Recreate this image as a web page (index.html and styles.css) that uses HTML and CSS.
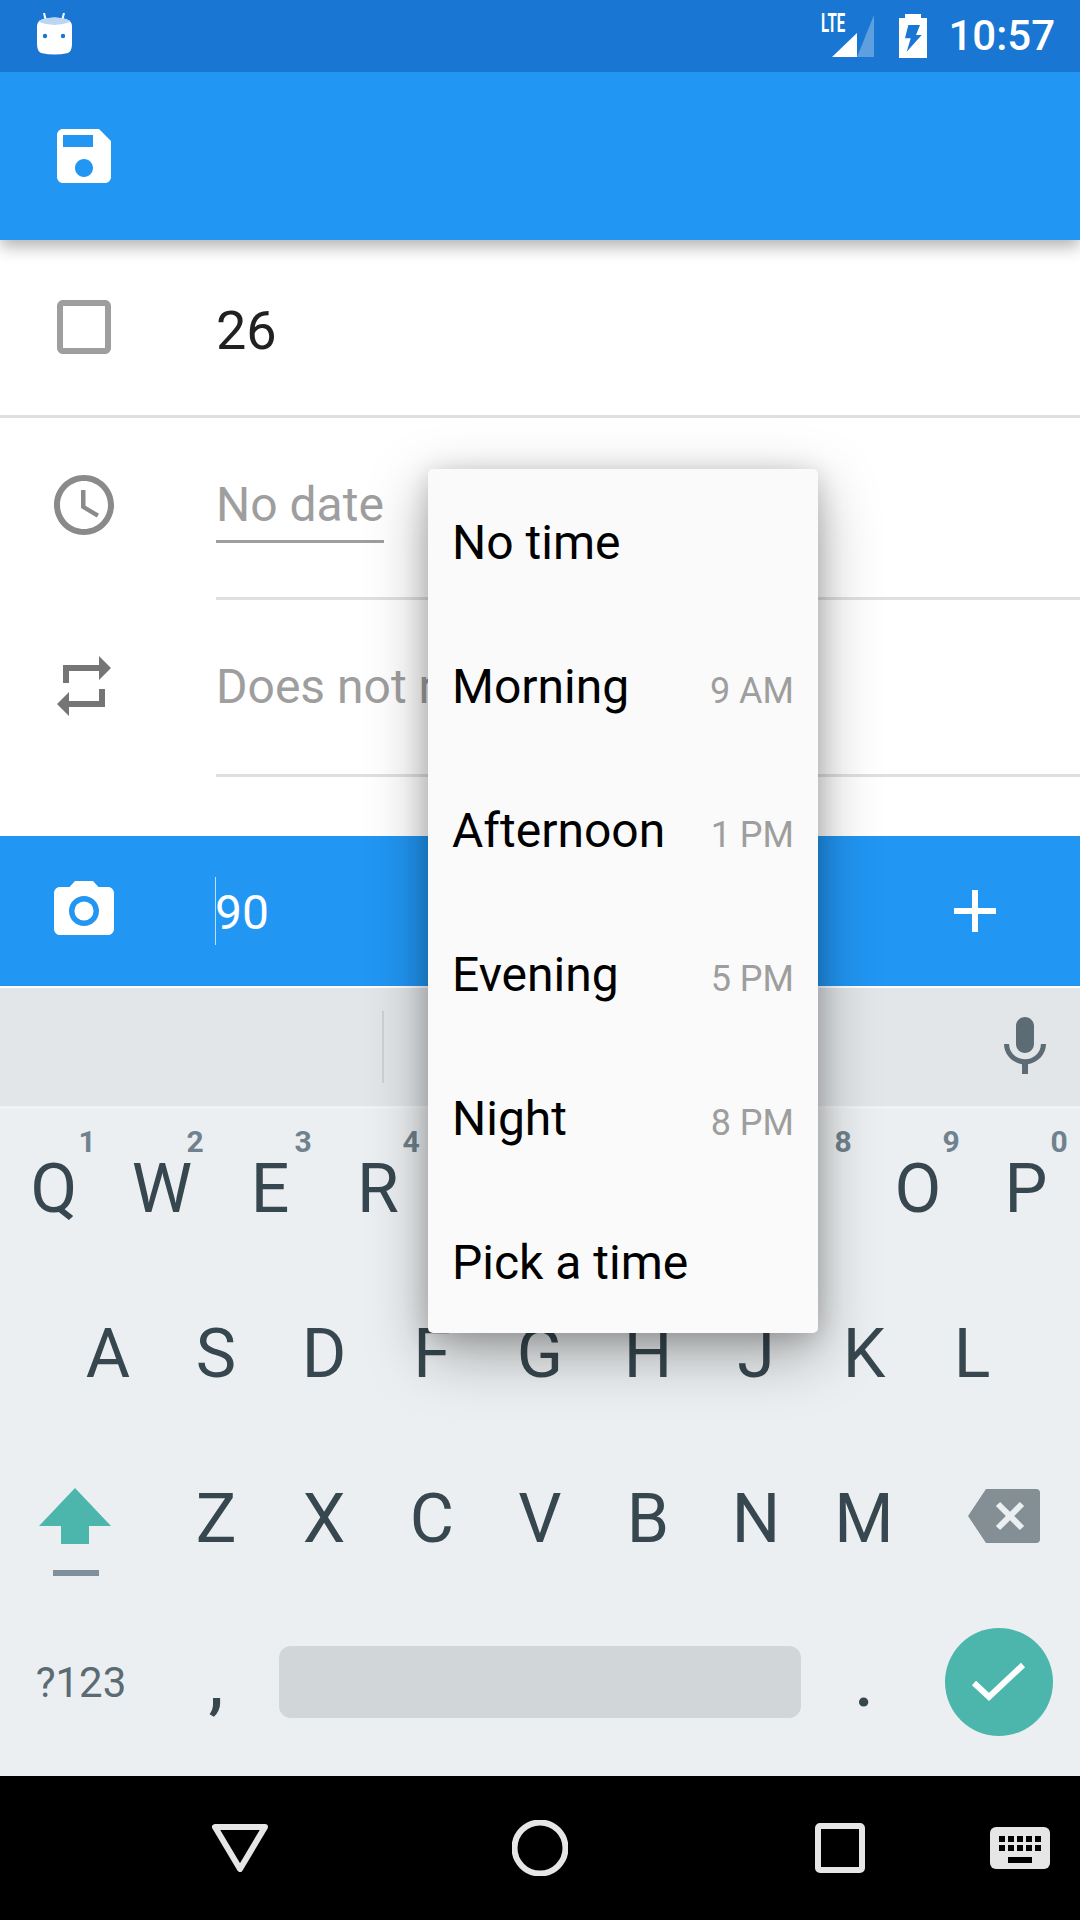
FILE: index.html
```html
<!DOCTYPE html>
<html lang="en">
<head>
    <meta charset="UTF-8">
    <meta name="viewport" content="width=device-width, initial-scale=1.0">
    <title>Edit task</title>
    <link rel="stylesheet" href="styles.css">
</head>
<body>
<div class="screen">
    <div class="status-bar">
        <svg class="mascot" viewBox="0 0 35 42" width="35" height="42">
            <path class="mascot-antenna" d="M7 0l2 8M27 0l-2 8"/>
            <path class="mascot-body" d="M6 6q11.500-3 23 0q6 2 6 7v18q0 7-4 9q-13.500 3-27 0q-4-2-4-9v-18q0-5 6-7z"/>
            <path class="mascot-top" d="M6 6q11.500-3 23 0q3 1 4 3q-15.500 6-31 0q1-2 4-3z"/>
            <circle class="mascot-eye" cx="8" cy="23" r="2.200"/>
            <circle class="mascot-eye" cx="26" cy="23" r="2.200"/>
        </svg>
        <div class="status-right">
            <div class="signal">
                <span class="lte">LTE</span>
                <svg viewBox="0 0 54 44" width="54" height="44">
                    <polygon class="signal-off" points="36,43 53,1 53,43"/>
                    <polygon class="signal-on" points="11,43 36,19 36,43"/>
                </svg>
            </div>
            <svg class="battery" viewBox="0 0 28 44" width="28" height="44">
                <path class="battery-body" d="M6 0h16v4h6v40h-28v-40h6z"/>
                <polygon class="battery-bolt" points="9.300,11 21,11 17,21 22.700,21 7.700,37.700 11.700,24.300 6,24.300"/>
            </svg>
            <span class="clock">10:57</span>
        </div>
    </div>

    <div class="app-bar">
        <svg class="icon icon-white" viewBox="0 0 24 24"><path d="M17 3H5c-1.110 0-2 .9-2 2v14c0 1.100.89 2 2 2h14c1.100 0 2-.9 2-2V7l-4-4zm-5 16c-1.660 0-3-1.340-3-3s1.340-3 3-3 3 1.340 3 3-1.340 3-3 3zm3-10H5V5h10v4z"/></svg>
    </div>

    <div class="form">
        <div class="row row-title">
            <svg class="icon icon-check" viewBox="0 0 24 24"><path d="M19 5v14H5V5h14m0-2H5c-1.100 0-2 .9-2 2v14c0 1.100.9 2 2 2h14c1.100 0 2-.9 2-2V5c0-1.100-.9-2-2-2z"/></svg>
            <span class="title-text">26</span>
        </div>
        <div class="row row-date">
            <svg class="icon icon-grey" viewBox="0 0 24 24"><path d="M11.990 2C6.470 2 2 6.480 2 12s4.470 10 9.990 10C17.520 22 22 17.520 22 12S17.520 2 11.990 2zM12 20c-4.420 0-8-3.580-8-8s3.580-8 8-8 8 3.580 8 8-3.580 8-8 8zm.5-13H11v6l5.250 3.150.75-1.230-4.500-2.670z"/></svg>
            <div class="field">
                <span class="hint hint-link">No date</span>
            </div>
        </div>
        <div class="row row-repeat">
            <svg class="icon icon-dark" viewBox="0 0 24 24"><path d="M7 7h10v3l4-4-4-4v3H5v6h2V7zm10 10H7v-3l-4 4 4 4v-3h12v-6h-2v4z"/></svg>
            <div class="field">
                <span class="hint">Does not repeat</span>
            </div>
        </div>
    </div>

    <div class="add-bar">
        <svg class="icon icon-white" viewBox="0 0 24 24"><circle cx="12" cy="12" r="3.200"/><path d="M9 2L7.170 4H4c-1.100 0-2 .9-2 2v12c0 1.100.9 2 2 2h16c1.100 0 2-.9 2-2V6c0-1.100-.9-2-2-2h-3.170L15 2H9zm3 15c-2.760 0-5-2.240-5-5s2.240-5 5-5 5 2.240 5 5-2.240 5-5 5z"/></svg>
        <span class="add-input">90</span>
        <svg class="plus" viewBox="0 0 42 42" width="42" height="42"><path d="M18 0h6v18h18v6h-18v18h-6v-18h-18v-6h18z"/></svg>
    </div>

    <div class="suggest-strip">
        <div class="suggest-cell"></div>
        <div class="suggest-cell"></div>
        <svg class="mic" viewBox="0 0 24 24"><path d="M12 14c1.660 0 2.990-1.340 2.990-3L15 5c0-1.660-1.340-3-3-3S9 3.340 9 5v6c0 1.660 1.340 3 3 3zm5.300-3c0 3-2.540 5.100-5.300 5.100S6.700 14 6.700 11H5c0 3.410 2.720 6.230 6 6.720V21h2v-3.280c3.280-.48 6-3.300 6-6.720h-1.700z"/></svg>
    </div>

    <div class="keyboard">
        <div class="key-row">
            <div class="key">Q<span class="key-num">1</span></div>
            <div class="key">W<span class="key-num">2</span></div>
            <div class="key">E<span class="key-num">3</span></div>
            <div class="key">R<span class="key-num">4</span></div>
            <!-- T Y U sit fully behind the time popup -->
            <div class="key"></div>
            <div class="key"></div>
            <div class="key"></div>
            <div class="key"><span class="key-num">8</span></div>
            <div class="key">O<span class="key-num">9</span></div>
            <div class="key">P<span class="key-num">0</span></div>
        </div>
        <div class="key-row key-row-home">
            <div class="key">A</div>
            <div class="key">S</div>
            <div class="key">D</div>
            <div class="key">F</div>
            <div class="key">G</div>
            <div class="key">H</div>
            <div class="key">J</div>
            <div class="key">K</div>
            <div class="key">L</div>
        </div>
        <div class="key-row">
            <div class="key key-wide key-shift">
                <svg viewBox="0 0 72 90" width="72" height="90">
                    <polygon class="shift-arrow" points="36,0 72,38 50,38 50,56 22,56 22,38 0,38"/>
                    <rect class="shift-lock" x="14" y="82" width="46" height="6"/>
                </svg>
            </div>
            <div class="key">Z</div>
            <div class="key">X</div>
            <div class="key">C</div>
            <div class="key">V</div>
            <div class="key">B</div>
            <div class="key">N</div>
            <div class="key">M</div>
            <div class="key key-wide key-back">
                <svg viewBox="0 0 72 54" width="72" height="54">
                    <path class="back-shape" d="M18 0h50q4 0 4 4v46q0 4-4 4h-50l-18-27z"/>
                    <path class="back-x" d="M30 15l24 24M54 15l-24 24"/>
                </svg>
            </div>
        </div>
        <div class="key-row key-row-bottom">
            <div class="key key-symbols">?123</div>
            <div class="key key-punct">,</div>
            <div class="space-bar"></div>
            <div class="key key-punct">.</div>
            <div class="enter-key">
                <svg viewBox="0 0 108 108" width="108" height="108"><path d="M29 55l15 14 34-32"/></svg>
            </div>
        </div>
    </div>

    <div class="nav-bar">
        <svg class="nav-back" viewBox="0 0 56 48" width="56" height="48"><path d="M3 3h50l-25 42z"/></svg>
        <svg class="nav-home" viewBox="0 0 56 56" width="56" height="56"><circle cx="28" cy="28" r="25.500"/></svg>
        <svg class="nav-recent" viewBox="0 0 50 50" width="50" height="50"><rect x="3" y="3" width="44" height="44" rx="2"/></svg>
        <svg class="nav-keyboard" viewBox="0 0 60 42" width="60" height="42">
            <rect class="kb-base" width="60" height="42" rx="6"/>
            <path class="kb-keys" d="M9 9h6v6h-6zM18 9h6v6h-6zM27 9h6v6h-6zM36 9h6v6h-6zM45 9h6v6h-6zM9 18h6v6h-6zM18 18h6v6h-6zM27 18h6v6h-6zM36 18h6v6h-6zM45 18h6v6h-6zM18 30h24v6h-24z"/>
        </svg>
    </div>

    <div class="time-menu">
        <div class="menu-item"><span>No time</span></div>
        <div class="menu-item"><span>Morning</span><span class="menu-hour">9 AM</span></div>
        <div class="menu-item"><span>Afternoon</span><span class="menu-hour">1 PM</span></div>
        <div class="menu-item"><span>Evening</span><span class="menu-hour">5 PM</span></div>
        <div class="menu-item"><span>Night</span><span class="menu-hour">8 PM</span></div>
        <div class="menu-item"><span>Pick a time</span></div>
    </div>
</div>
</body>
</html>
```

FILE: styles.css
```css
* {
    box-sizing: border-box;
}
body {
    margin: 0;
    font-family: Roboto, "Noto Sans", sans-serif;
    background-color: #fff;
}
.screen {
    position: relative;
    width: 1080px;
    height: 1920px;
    overflow: hidden;
    display: flex;
    flex-direction: column;
}

/* status bar */
.status-bar {
    height: 72px;
    background-color: #1976D2;
    display: flex;
    align-items: flex-start;
    justify-content: space-between;
    padding: 0 25px 0 37px;
    position: relative;
    z-index: 2;
}
.mascot {
    margin-top: 13px;
}
.mascot-antenna {
    stroke: #fff;
    stroke-width: 2;
    fill: none;
}
.mascot-body {
    fill: #fff;
}
.mascot-top {
    fill: #bbd6f3;
}
.mascot-eye {
    fill: #1976D2;
}
.status-right {
    display: flex;
    align-items: flex-start;
}
.signal {
    position: relative;
    width: 54px;
    height: 44px;
    margin-top: 14px;
    margin-right: 24px;
}
.lte {
    position: absolute;
    left: 0;
    top: 1px;
    font-size: 25px;
    line-height: 18px;
    font-weight: 700;
    color: #fff;
    transform: scaleX(0.6);
    transform-origin: left center;
}
.signal-on {
    fill: #fff;
}
.signal-off {
    fill: #fff;
    opacity: 0.3;
}
.battery {
    margin-top: 14px;
    margin-right: 21px;
}
.battery-body {
    fill: #fff;
}
.battery-bolt {
    fill: #1976D2;
}
.clock {
    color: #fff;
    font-size: 42px;
    font-weight: 500;
    line-height: 72px;
}

/* icons */
.icon {
    width: 72px;
    height: 72px;
    flex-shrink: 0;
}
.icon-white {
    fill: #fff;
}
.icon-check {
    fill: #9e9e9e;
}
.icon-grey {
    fill: #8a8a8a;
}
.icon-dark {
    fill: #757575;
}

/* app bar */
.app-bar {
    height: 168px;
    background-color: #2196F3;
    display: flex;
    align-items: center;
    padding-left: 48px;
    box-shadow: 0 6px 16px rgba(0, 0, 0, 0.32);
    position: relative;
    z-index: 1;
}

/* form */
.form {
    height: 596px;
    background-color: #fff;
}
.row {
    display: flex;
    padding-left: 48px;
}
.row-title {
    height: 178px;
    padding-bottom: 2px;
    align-items: center;
    border-bottom: 3px solid #e0e0e0;
}
.title-text {
    margin-left: 96px;
    padding-top: 8px;
    font-size: 54px;
    color: #212121;
}
.row-date {
    height: 182px;
    padding-top: 51px;
}
.row-repeat {
    height: 177px;
    padding-top: 50px;
}
.field {
    flex: 1;
    margin-left: 96px;
    margin-top: -51px;
    padding-top: 59px;
    border-bottom: 3px solid #e0e0e0;
}
.row-repeat .field {
    margin-top: -50px;
}
.hint {
    display: inline-block;
    font-size: 48px;
    line-height: 56px;
    color: #9e9e9e;
    white-space: nowrap;
}
.hint-link {
    padding-bottom: 7px;
    border-bottom: 3px solid #9e9e9e;
}

/* quick add bar */
.add-bar {
    height: 150px;
    background-color: #2196F3;
    display: flex;
    align-items: center;
    padding: 0 84px 0 48px;
}
.add-input {
    margin-left: 95px;
    padding-top: 4px;
    border-left: 1px solid rgba(255, 255, 255, 0.7);
    font-size: 48px;
    line-height: 64px;
    color: #fff;
    text-indent: -1px;
}
.plus {
    margin-left: auto;
    fill: #fff;
}

/* keyboard */
.suggest-strip {
    height: 121px;
    margin-top: 2px;
    background-color: #e2e6e9;
    border-bottom: 3px solid #f0f2f4;
    display: flex;
    align-items: center;
}
.suggest-cell {
    width: 384px;
    height: 72px;
    border-right: 2px solid #cdd2d6;
}
.suggest-cell + .suggest-cell {
    width: 600px;
    border-right: 0;
}
.mic {
    width: 72px;
    height: 72px;
    margin-left: 5px;
    fill: #5d6b74;
}
.keyboard {
    flex: 1;
    background-color: #ECEFF1;
}
.key-row {
    display: flex;
    height: 165px;
}
.key-row-home {
    padding-left: 54px;
}
.key-row-bottom {
    height: 172px;
    align-items: center;
}
.key {
    position: relative;
    width: 108px;
    height: 100%;
    display: flex;
    align-items: center;
    justify-content: center;
    padding-bottom: 6px;
    font-size: 68px;
    color: #37474F;
}
.key-num {
    position: absolute;
    left: 69px;
    top: 15px;
    width: 36px;
    text-align: center;
    font-size: 30px;
    font-weight: 700;
    color: #6f828d;
}
.key-wide {
    width: 162px;
}
.key-shift {
    padding-right: 12px;
    padding-top: 28px;
}
.shift-arrow {
    fill: #4DB6AC;
}
.shift-lock {
    fill: #80909a;
}
.key-back {
    padding-left: 10px;
    padding-bottom: 12px;
}
.back-shape {
    fill: #838f95;
}
.back-x {
    stroke: #ECEFF1;
    stroke-width: 6;
    fill: none;
}
.key-symbols {
    width: 162px;
    font-size: 42px;
    color: #5a6b74;
    padding-bottom: 15px;
}
.key-punct {
    padding-bottom: 15px;
    font-weight: 500;
}
.space-bar {
    width: 522px;
    height: 72px;
    margin-left: 9px;
    margin-bottom: 17px;
    background-color: #d1d6d9;
    border-radius: 12px;
}
.key-row-bottom .key-punct + .space-bar + .key-punct {
    width: 108px;
    margin-left: 9px;
}
.enter-key {
    width: 108px;
    height: 108px;
    margin-left: 27px;
    margin-bottom: 17px;
    border-radius: 50%;
    background-color: #4DB6AC;
}
.enter-key path {
    stroke: #fff;
    stroke-width: 6;
    fill: none;
}

/* navigation bar */
.nav-bar {
    position: relative;
    height: 144px;
    background-color: #000;
    display: flex;
    align-items: center;
    padding-left: 212px;
}
.nav-back path {
    stroke: #e6e6e6;
    stroke-width: 6;
    stroke-linejoin: round;
    fill: none;
}
.nav-back {
    margin-right: 244px;
}
.nav-home circle,
.nav-recent rect {
    stroke: #e6e6e6;
    stroke-width: 6;
    fill: none;
}
.nav-home {
    margin-right: 247px;
}
.nav-recent {
    margin-right: 125px;
}
.kb-base {
    fill: #e6e6e6;
}
.kb-keys {
    fill: #000;
}

/* time popup */
.time-menu {
    position: absolute;
    left: 428px;
    top: 469px;
    width: 390px;
    height: 864px;
    background-color: #fafafa;
    border-radius: 5px;
    box-shadow: 0 20px 60px rgba(0, 0, 0, 0.34), 0 4px 24px rgba(0, 0, 0, 0.16);
    z-index: 3;
}
.menu-item {
    height: 144px;
    display: flex;
    align-items: center;
    justify-content: space-between;
    padding: 3px 24px 0;
    font-size: 48px;
    color: #000;
}
.menu-hour {
    padding-top: 9px;
    font-size: 36px;
    color: #9e9e9e;
}
```
